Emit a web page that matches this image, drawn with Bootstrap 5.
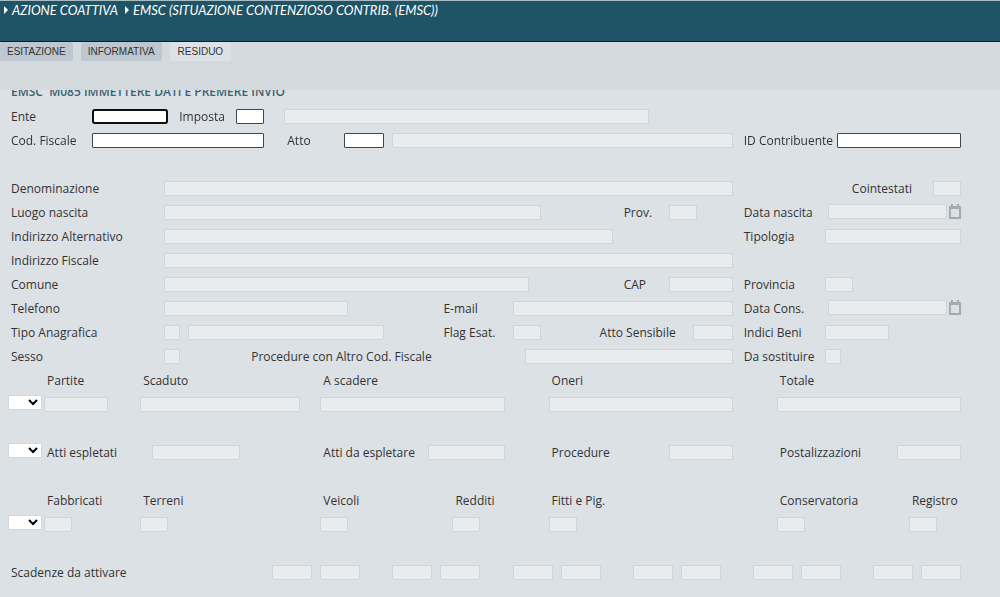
<!DOCTYPE html>
<html lang="it">
<head>
<meta charset="utf-8">
<meta name="viewport" content="width=device-width, initial-scale=1">
<title>EMSC - Situazione contenzioso</title>
<link rel="stylesheet" href="https://cdn.jsdelivr.net/npm/bootstrap@5.3.0/dist/css/bootstrap.min.css">
<style>
  body { background: #dce1e5; color: #333; font: 12px/24px "Open Sans", "Noto Sans", sans-serif; }

  .testata { background: #1f5466; border-top: 1px solid #a9bcc2; border-bottom: 1px solid #06212b; height: 42px; }
  .percorso { font: italic 13px/19px Lato, sans-serif; padding-left: 4px; column-gap: 7px; }
  .percorso a { color: #fff; }
  .percorso a::before { content: ""; display: inline-block; border: solid transparent; border-width: 4px 0 4px 4px; border-left-color: #fff; margin-right: 4px; vertical-align: 1px; }

  .schede { background: #d4d9dd; height: 48px; column-gap: 8px; }
  .schede .nav-link { background: #bec7cf; color: #333; font: 10px/19px "Liberation Sans", Arial, sans-serif; padding: 0 7px; border-radius: 2px; }
  .schede .nav-link.active { background: #dce1e5; padding: 0 8px; }

  /* 80 character columns per row, as on the terminal screen */
  .griglia { padding: 0 39px 0 8px; overflow: hidden; }
  .messaggio { margin-top: -10px; padding-left: 3px; height: 24px; font-weight: 600; color: #3c6373; white-space: pre; }
  .fila { display: grid; grid-template-columns: repeat(80, minmax(0, 1fr)); column-gap: 8px; height: 24px; align-items: start; }
  .fila > * { grid-row: 1; }
  .fila label { padding-left: 3px; line-height: 26px; white-space: nowrap; }
  .campo { width: 100%; min-width: 0; height: 15px; margin-top: 5px; padding: 0 2px; border: 1px solid #444; border-radius: 1px; background: #fff; font-size: 11px; line-height: 13px; }
  .campo:disabled { background: #e8ecee; border-color: #d0d4d6; }
  .campo:focus { outline: 2px solid #101010; outline-offset: -2px; border-radius: 3px; }
  .scelta { width: 34px; height: 15px; margin-top: 3px; padding: 0; border: 1px solid #d4d7d9; background: #fff; font-size: 10px; }
  .gruppo-data { padding-left: 3px; column-gap: 2px; margin-top: 4px; }
  .gruppo-data .campo { margin-top: 0; }
  .calendario { line-height: 0; }

  .k1 { grid-column-start: 1 }  .k4 { grid-column-start: 4 }  .k8 { grid-column-start: 8 }  .k12 { grid-column-start: 12 }
  .k13 { grid-column-start: 13 } .k14 { grid-column-start: 14 } .k15 { grid-column-start: 15 } .k16 { grid-column-start: 16 }
  .k20 { grid-column-start: 20 } .k21 { grid-column-start: 21 } .k23 { grid-column-start: 23 } .k24 { grid-column-start: 24 }
  .k27 { grid-column-start: 27 } .k29 { grid-column-start: 29 } .k33 { grid-column-start: 33 } .k36 { grid-column-start: 36 }
  .k37 { grid-column-start: 37 } .k38 { grid-column-start: 38 } .k43 { grid-column-start: 43 } .k44 { grid-column-start: 44 }
  .k46 { grid-column-start: 46 } .k47 { grid-column-start: 47 } .k50 { grid-column-start: 50 } .k52 { grid-column-start: 52 }
  .k53 { grid-column-start: 53 } .k56 { grid-column-start: 56 } .k57 { grid-column-start: 57 } .k58 { grid-column-start: 58 }
  .k62 { grid-column-start: 62 } .k63 { grid-column-start: 63 } .k65 { grid-column-start: 65 } .k67 { grid-column-start: 67 }
  .k69 { grid-column-start: 69 } .k70 { grid-column-start: 70 } .k71 { grid-column-start: 71 } .k73 { grid-column-start: 73 }
  .k75 { grid-column-start: 75 } .k76 { grid-column-start: 76 } .k77 { grid-column-start: 77 } .k78 { grid-column-start: 78 }
  .n2 { grid-column-end: span 2 }  .n3 { grid-column-end: span 3 }  .n4 { grid-column-end: span 4 }  .n6 { grid-column-end: span 6 }
  .n7 { grid-column-end: span 7 }  .n8 { grid-column-end: span 8 }  .n11 { grid-column-end: span 11 } .n12 { grid-column-end: span 12 }
  .n14 { grid-column-end: span 14 } .n15 { grid-column-end: span 15 } .n16 { grid-column-end: span 16 } .n17 { grid-column-end: span 17 }
  .n18 { grid-column-end: span 18 } .n19 { grid-column-end: span 19 } .n29 { grid-column-end: span 29 } .n31 { grid-column-end: span 31 }
  .n32 { grid-column-end: span 32 } .n38 { grid-column-end: span 38 } .n48 { grid-column-end: span 48 }
</style>
</head>
<body>
<svg class="d-none" xmlns="http://www.w3.org/2000/svg">
  <symbol id="cal" viewBox="0 0 12 15"><path d="M1 3.5h10V14H1z" fill="#dce1e5" stroke="#a6aaae" stroke-width="2"/><path d="M0 2h12v3H0zM2 0h2v3H2zM8 0h2v3H8z" fill="#a6aaae"/></symbol>
</svg>

<header class="testata">
  <nav class="percorso d-flex" aria-label="Percorso">
    <a class="text-decoration-none" href="#">AZIONE COATTIVA</a>
    <a class="text-decoration-none" href="#">EMSC (SITUAZIONE CONTENZIOSO CONTRIB. (EMSC))</a>
  </nav>
</header>

<nav class="schede nav align-items-start" aria-label="Schede">
  <a class="nav-link" href="#">ESITAZIONE</a>
  <a class="nav-link" href="#">INFORMATIVA</a>
  <a class="nav-link active" href="#" aria-current="page">RESIDUO</a>
</nav>

<form class="griglia">
  <div class="messaggio">EMSC  M085 IMMETTERE DATI E PREMERE INVIO</div>

  <div class="fila">
    <label class="k1" for="ente">Ente</label><input class="campo k8 n7" id="ente" type="text" autofocus>
    <label class="k15" for="imposta">Imposta</label><input class="campo k20 n3" id="imposta" type="text">
    <input class="campo k24 n31" type="text" aria-label="Descrizione imposta" disabled>
  </div>
  <div class="fila">
    <label class="k1" for="cf">Cod. Fiscale</label><input class="campo k8 n15" id="cf" type="text">
    <label class="k24" for="atto">Atto</label><input class="campo k29 n4" id="atto" type="text">
    <input class="campo k33 n29" type="text" aria-label="Descrizione atto" disabled>
    <label class="k62" for="idc">ID Contribuente</label><input class="campo k70 n11" id="idc" type="text">
  </div>
  <div class="fila"></div>
  <div class="fila">
    <label class="k1" for="den">Denominazione</label><input class="campo k14 n48" id="den" type="text" disabled>
    <label class="k71" for="coint">Cointestati</label><input class="campo k78 n3" id="coint" type="text" disabled>
  </div>
  <div class="fila">
    <label class="k1" for="luogo">Luogo nascita</label><input class="campo k14 n32" id="luogo" type="text" disabled>
    <label class="k52" for="prov">Prov.</label><input class="campo k56 n3" id="prov" type="text" disabled>
    <label class="k62" for="nascita">Data nascita</label>
    <div class="gruppo-data d-flex k69 n12"><input class="campo" id="nascita" type="text" disabled><button class="calendario btn p-0 border-0" type="button" aria-label="Calendario"><svg width="12" height="15"><use href="#cal"/></svg></button></div>
  </div>
  <div class="fila">
    <label class="k1" for="indalt">Indirizzo Alternativo</label><input class="campo k14 n38" id="indalt" type="text" disabled>
    <label class="k62" for="tipologia">Tipologia</label><input class="campo k69 n12" id="tipologia" type="text" disabled>
  </div>
  <div class="fila">
    <label class="k1" for="indfis">Indirizzo Fiscale</label><input class="campo k14 n48" id="indfis" type="text" disabled>
  </div>
  <div class="fila">
    <label class="k1" for="comune">Comune</label><input class="campo k14 n31" id="comune" type="text" disabled>
    <label class="k52" for="cap">CAP</label><input class="campo k56 n6" id="cap" type="text" disabled>
    <label class="k62" for="provincia">Provincia</label><input class="campo k69 n3" id="provincia" type="text" disabled>
  </div>
  <div class="fila">
    <label class="k1" for="tel">Telefono</label><input class="campo k14 n16" id="tel" type="text" disabled>
    <label class="k37" for="email">E-mail</label><input class="campo k43 n19" id="email" type="text" disabled>
    <label class="k62" for="cons">Data Cons.</label>
    <div class="gruppo-data d-flex k69 n12"><input class="campo" id="cons" type="text" disabled><button class="calendario btn p-0 border-0" type="button" aria-label="Calendario"><svg width="12" height="15"><use href="#cal"/></svg></button></div>
  </div>
  <div class="fila">
    <label class="k1" for="tipo">Tipo Anagrafica</label><input class="campo k14 n2" id="tipo" type="text" disabled>
    <input class="campo k16 n17" type="text" aria-label="Descrizione tipo anagrafica" disabled>
    <label class="k37" for="flag">Flag Esat.</label><input class="campo k43 n3" id="flag" type="text" disabled>
    <label class="k50" for="sens">Atto Sensibile</label><input class="campo k58 n4" id="sens" type="text" disabled>
    <label class="k62" for="beni">Indici Beni</label><input class="campo k69 n6" id="beni" type="text" disabled>
  </div>
  <div class="fila">
    <label class="k1" for="sesso">Sesso</label><input class="campo k14 n2" id="sesso" type="text" disabled>
    <label class="k21" for="altro">Procedure con Altro Cod. Fiscale</label><input class="campo k44 n18" id="altro" type="text" disabled>
    <label class="k62" for="sost">Da sostituire</label><input class="campo k69 n2" id="sost" type="text" disabled>
  </div>

  <div class="fila">
    <label class="k4" for="partite">Partite</label><label class="k12" for="scaduto">Scaduto</label>
    <label class="k27" for="scadere">A scadere</label><label class="k46" for="oneri">Oneri</label><label class="k65" for="totale">Totale</label>
  </div>
  <div class="fila">
    <select class="scelta k1 n3" aria-label="Opzione partite"><option></option></select>
    <input class="campo k4 n6" id="partite" type="text" disabled><input class="campo k12 n14" id="scaduto" type="text" disabled>
    <input class="campo k27 n16" id="scadere" type="text" disabled><input class="campo k46 n16" id="oneri" type="text" disabled>
    <input class="campo k65 n16" id="totale" type="text" disabled>
  </div>
  <div class="fila"></div>
  <div class="fila">
    <select class="scelta k1 n3" aria-label="Opzione atti"><option></option></select>
    <label class="k4" for="espletati">Atti espletati</label><input class="campo k13 n8" id="espletati" type="text" disabled>
    <label class="k27" for="espletare">Atti da espletare</label><input class="campo k36 n7" id="espletare" type="text" disabled>
    <label class="k46" for="procedure">Procedure</label><input class="campo k56 n6" id="procedure" type="text" disabled>
    <label class="k65" for="post">Postalizzazioni</label><input class="campo k75 n6" id="post" type="text" disabled>
  </div>
  <div class="fila"></div>
  <div class="fila">
    <label class="k4" for="fabb">Fabbricati</label><label class="k12" for="terreni">Terreni</label><label class="k27" for="veicoli">Veicoli</label>
    <label class="k38" for="redditi">Redditi</label><label class="k46" for="fitti">Fitti e Pig.</label>
    <label class="k65" for="conserv">Conservatoria</label><label class="k76" for="registro">Registro</label>
  </div>
  <div class="fila">
    <select class="scelta k1 n3" aria-label="Opzione beni"><option></option></select>
    <input class="campo k4 n3" id="fabb" type="text" disabled><input class="campo k12 n3" id="terreni" type="text" disabled>
    <input class="campo k27 n3" id="veicoli" type="text" disabled><input class="campo k38 n3" id="redditi" type="text" disabled>
    <input class="campo k46 n3" id="fitti" type="text" disabled><input class="campo k65 n3" id="conserv" type="text" disabled>
    <input class="campo k76 n3" id="registro" type="text" disabled>
  </div>
  <div class="fila"></div>
  <div class="fila">
    <label class="k1" for="scad1">Scadenze da attivare</label>
    <input class="campo k23 n4" id="scad1" type="text" disabled><input class="campo k27 n4" type="text" aria-label="Scadenza 2" disabled>
    <input class="campo k33 n4" type="text" aria-label="Scadenza 3" disabled><input class="campo k37 n4" type="text" aria-label="Scadenza 4" disabled>
    <input class="campo k43 n4" type="text" aria-label="Scadenza 5" disabled><input class="campo k47 n4" type="text" aria-label="Scadenza 6" disabled>
    <input class="campo k53 n4" type="text" aria-label="Scadenza 7" disabled><input class="campo k57 n4" type="text" aria-label="Scadenza 8" disabled>
    <input class="campo k63 n4" type="text" aria-label="Scadenza 9" disabled><input class="campo k67 n4" type="text" aria-label="Scadenza 10" disabled>
    <input class="campo k73 n4" type="text" aria-label="Scadenza 11" disabled><input class="campo k77 n4" type="text" aria-label="Scadenza 12" disabled>
  </div>
</form>
<script src="https://cdn.jsdelivr.net/npm/bootstrap@5.3.0/dist/js/bootstrap.bundle.min.js"></script>
</body>
</html>
